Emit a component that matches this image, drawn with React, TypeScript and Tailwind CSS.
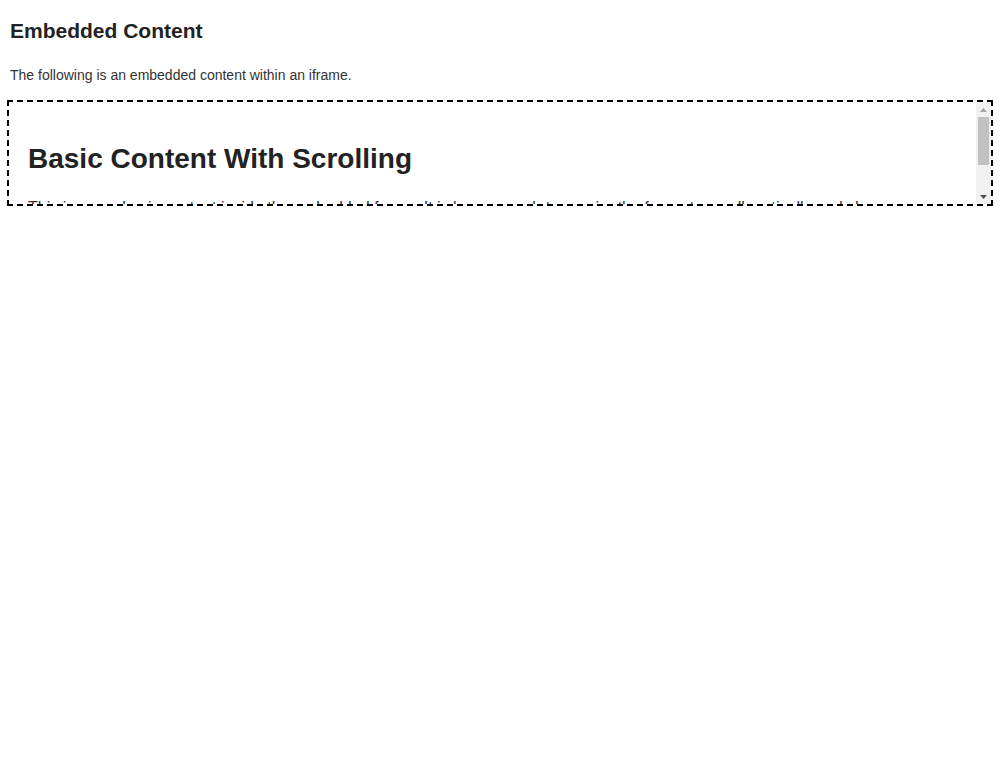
export default function App() {
  return (
    <div className="min-h-screen bg-white px-[7px] font-['Liberation_Sans',Arial,sans-serif] text-[#222]">
      <h2 className="pl-[3px] pt-[19px] text-[21px] font-bold leading-[24px]">Embedded Content</h2>
      <p className="mt-[24px] pl-[3px] text-[14px] leading-[17px] text-[#333]">
        The following is an embedded content within an iframe.
      </p>
      <div className="mt-[16px] flex h-[106px] w-[986px] border-2 border-dashed border-black">
        <div className="flex-1 overflow-hidden bg-white">
          <div className="px-[19px] pt-[20px] pb-[20px]">
            <h1 className="pt-[20px] text-[28px] font-bold leading-[33px] text-[#222]">
              Basic Content With Scrolling
            </h1>
            <p className="mt-[23px] whitespace-nowrap text-[16px] leading-[20px] text-[#333]">
              This is some basic content inside the embedded frame. It is long enough to require the frame to scroll vertically and show more.
            </p>
          </div>
        </div>
        {/* scrollbar */}
        <div className="flex w-[15px] flex-col bg-[#f1f1f1]">
          <div className="flex h-[15px] items-center justify-center">
            <svg width="7" height="4" viewBox="0 0 7 4">
              <path d="M3.5 0 L7 4 L0 4 Z" fill="#a3a3a3" />
            </svg>
          </div>
          <div className="mx-[2px] h-[48px] bg-[#c1c1c1]" />
          <div className="flex-1" />
          <div className="flex h-[15px] items-center justify-center">
            <svg width="7" height="4" viewBox="0 0 7 4">
              <path d="M0 0 L7 0 L3.5 4 Z" fill="#505050" />
            </svg>
          </div>
        </div>
      </div>
    </div>
  );
}
